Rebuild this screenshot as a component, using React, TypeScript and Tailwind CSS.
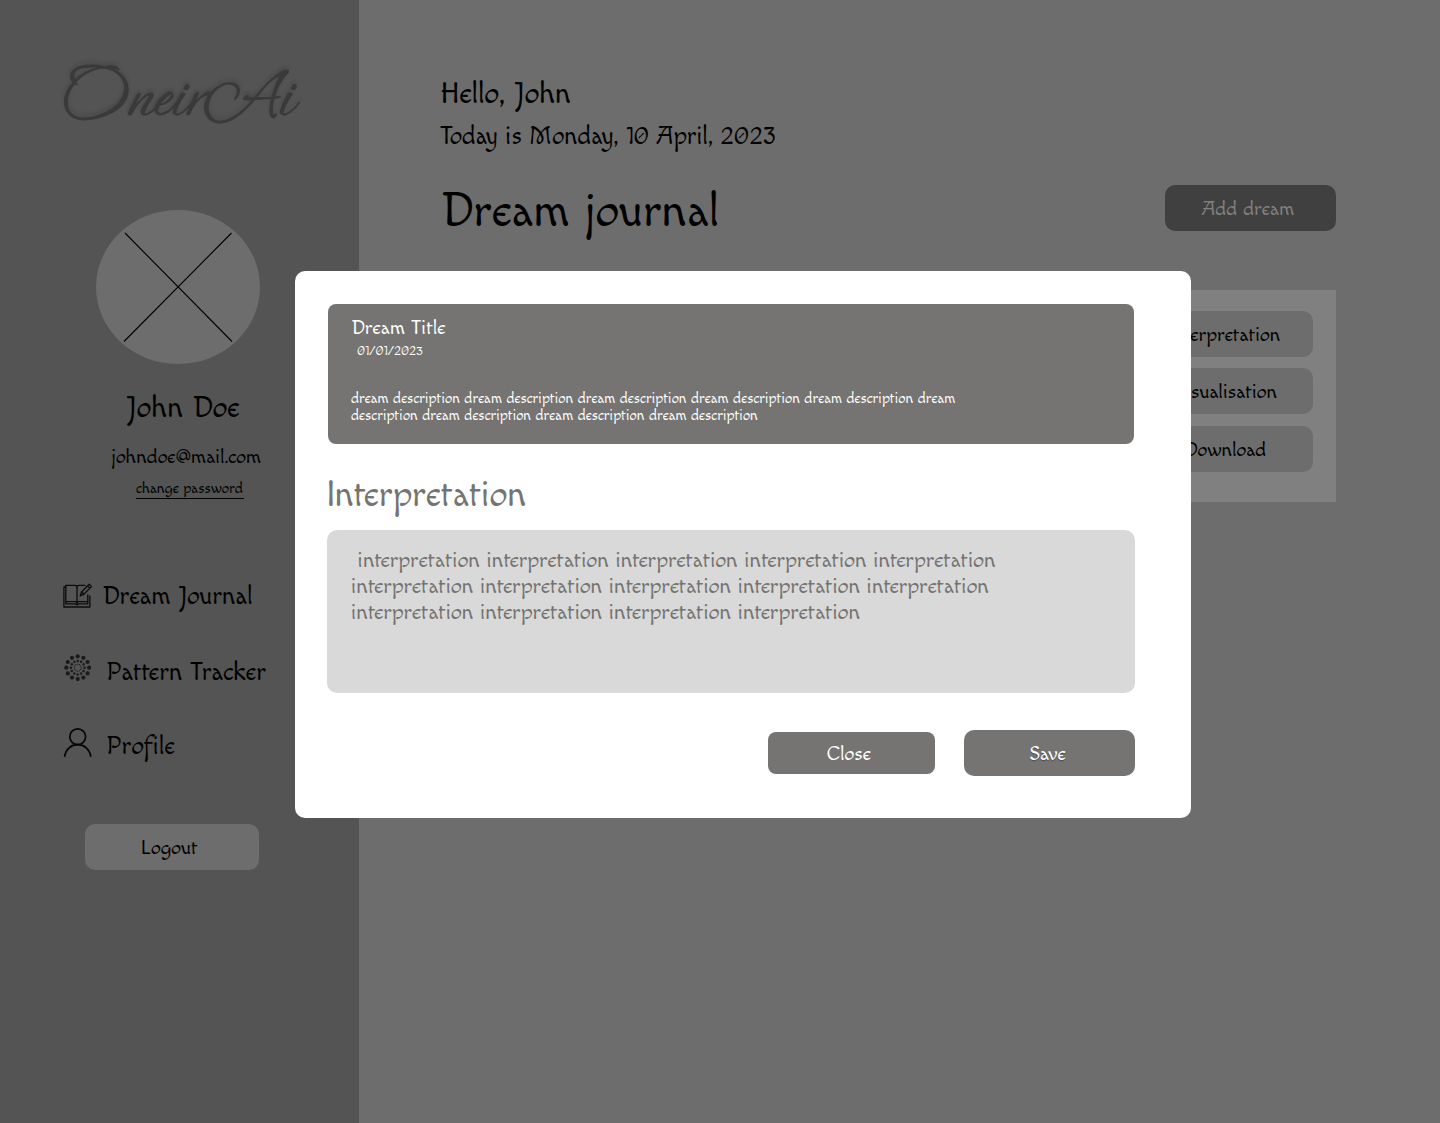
import type { ReactNode } from "react";

function BookIcon() {
  return (
    <svg width="30" height="26" viewBox="0 0 30 26" fill="none" stroke="#0c0c0c" strokeWidth="1.3" strokeLinejoin="round" strokeLinecap="round">
      <path d="M2.8 4H.9v20h26V13" />
      <path d="M2.8 20.8V2.3h9.2c1.2 0 2 .7 2 1.7v14.2M2.8 18.6h9.4c1 0 1.8.8 1.8 2 0-1.200.8-2 1.800-2h9V12M2.800 20.900h9.600l1.600 1 1.600-1h9.200v-2.300" />
      <path d="M14 4c0-1 .8-1.700 2-1.700h6" />
      <path d="M17.200 12.800l1.300-3.800 7.700-7.700 2.300 2.300-7.700 7.700zM24.600 2.900l2.300 2.300M18.500 9l2.300 2.300" />
    </svg>
  );
}

function ring(count: number, radius: number) {
  return Array.from({ length: count }, (_, i) => {
    const a = (i * 2 * Math.PI) / count;
    return { x: 13.7 + radius * Math.cos(a), y: 13.7 + radius * Math.sin(a) };
  });
}

function PatternIcon() {
  return (
    <svg width="28" height="28" viewBox="0 0 28 28" fill="#1b1b1b">
      {ring(12, 11.4).map((p, i) => <circle key={i} cx={p.x} cy={p.y} r="2.1" />)}
      {ring(12, 6.8).map((p, i) => <circle key={i} cx={p.x} cy={p.y} r="1.25" />)}
      {ring(12, 3.5).map((p, i) => <circle key={i} cx={p.x} cy={p.y} r="0.6" />)}
    </svg>
  );
}

function ProfileIcon() {
  return (
    <svg width="30" height="30" viewBox="0 0 30 30" fill="none" stroke="#060606" strokeWidth="1.7" strokeLinecap="round">
      <circle cx="14.700" cy="8.800" r="7.900" />
      <path d="M1.700 28.200c1-7 6.500-11.500 13-11.500s12 4.500 13 11.500" />
    </svg>
  );
}

function CardButton({ children }: { children: ReactNode }) {
  return <button className="h-[46px] w-[171px] rounded-[10px] bg-[#6d6d6d] pt-[2px] pr-[5px] text-[20px] text-black">{children}</button>;
}

export default function App() {
  return (
    <div className="relative flex h-[1123px] w-[1440px] overflow-hidden bg-[#6d6d6d] font-['Macondo','Lato',sans-serif] text-black">
      <aside className="flex w-[359px] shrink-0 flex-col bg-[#545454]">
        <div className="mt-[58px] h-[77px] pl-[62px] font-['Ephesis','Liberation_Serif',serif] text-[69px] leading-[80px] whitespace-nowrap text-[#3a3a3a] [-webkit-text-stroke:0.8px_#3a3a3a] [text-shadow:0_-3px_4px_#00000030]">OneirAi</div>
        <div className="mt-[75px] ml-[96px] h-[154px] w-[164px] rounded-[50%] bg-[#6d6d6d]">
          <svg width="164" height="154" viewBox="0 0 164 154" stroke="#000" strokeWidth="1.1"><path d="M29 23L136 131.500M135.500 23L28 131.500" /></svg>
        </div>
        <div className="mt-[24px] ml-[126px] text-[30px] leading-[40px]">John Doe</div>
        <div className="mt-[14px] ml-[111px] text-[20px] leading-[30px]">johndoe@mail.com</div>
        <a className="mt-[5px] ml-[136px] w-[108px] border-b border-black pt-px text-[15px] leading-[20px] whitespace-nowrap"><span className="relative top-px">change password</span></a>
        <nav className="mt-[76px] text-[25.4px] leading-[40px] whitespace-nowrap">
          <a className="flex h-[40px] items-center pl-[63px]"><span className="mt-px"><BookIcon /></span><span className="mt-[2px] ml-[9px]">Dream Journal</span></a>
          <a className="mt-[36px] flex h-[40px] items-center pl-[64px]"><span className="-mt-[7px]"><PatternIcon /></span><span className="mt-[2px] ml-[14px]">Pattern Tracker</span></a>
          <a className="mt-[34px] flex h-[40px] items-center pl-[63px]"><span className="-mt-[4px]"><ProfileIcon /></span><span className="mt-[2px] ml-[13px]">Profile</span></a>
        </nav>
        <button className="mt-[59px] ml-[85px] h-[46px] w-[174px] rounded-[10px] bg-[#6d6d6d] pt-[2px] pr-[5px] text-[20px]">Logout</button>
      </aside>

      <main className="flex flex-1 flex-col pt-[74px] pr-[104px] pl-[81px]">
        <p className="text-[30px] leading-[40px]">Hello, John</p>
        <p className="mt-[3px] text-[25px] leading-[40px]">Today is Monday, 10 April, 2023</p>
        <div className="mt-[25px] flex h-[60px] justify-between">
          <h1 className="text-[48px] leading-[60px]">Dream journal</h1>
          <button className="mt-[3px] h-[46px] w-[171px] rounded-[10px] bg-[#404040] pt-[2px] pr-[5px] text-[20px] text-[#808080]">Add dream</button>
        </div>
        <section className="mt-[48px] ml-px flex h-[212px] shrink-0 flex-col items-end bg-[#808080] pt-[21px] pr-[23px]">
          <CardButton>Interpretation</CardButton>
          <div className="mt-[11px]"><CardButton>Visualisation</CardButton></div>
          <div className="mt-[12px]"><CardButton>Download</CardButton></div>
        </section>
      </main>

      <div role="dialog" className="absolute top-[271px] left-[295px] flex h-[547px] w-[896px] flex-col rounded-[10px] bg-white pr-[56px] pl-[32px]">
        <article className="mt-[33px] mr-px ml-px h-[140px] rounded-[8px] bg-[#757472] text-white">
          <h2 className="mt-[9px] ml-[23px] text-[20px] leading-[30px]">Dream Title</h2>
          <p className="ml-[29px] text-[13px] leading-[16px]">01/01/2023</p>
          <p className="mt-[31px] ml-[23px] w-[650px] text-[14.750px] leading-[17px]">dream description dream description dream description dream description dream description dream<br />description dream description dream description dream description</p>
        </article>
        <h2 className="mt-[27px] text-[36px] leading-[50px] text-[#757472]">Interpretation</h2>
        <div className="mt-[9px] h-[163px] rounded-[10px] bg-[#d9d9d9] pt-[17px] pl-[24px] text-[22px] leading-[26px] whitespace-pre text-[#757472]">{" interpretation interpretation interpretation interpretation interpretation\ninterpretation interpretation interpretation interpretation interpretation\ninterpretation interpretation interpretation interpretation"}</div>
        <div className="mt-[37px] flex items-center justify-end gap-[29px] text-[20px] text-white">
          <button className="h-[42px] w-[167px] rounded-[8px] bg-[#757472] pt-[2px] pr-[5px]">Close</button>
          <button className="h-[46px] w-[171px] rounded-[10px] bg-[#757472] pt-[2px] pr-[4px] [text-shadow:0_1px_1px_#00000060]">Save</button>
        </div>
      </div>
    </div>
  );
}
